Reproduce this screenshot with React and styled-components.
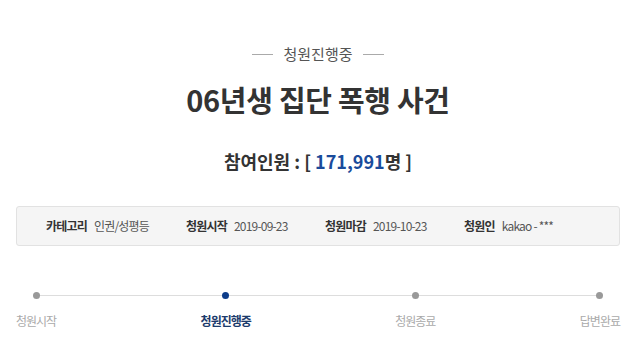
import React from 'react';
import styled, { createGlobalStyle } from 'styled-components';

const GlobalStyle = createGlobalStyle`
	body {
		margin: 0;
		background: #fff;
		font-family: "Noto Sans CJK KR", "Noto Sans", sans-serif;
		color: #333;
	}
`;

const info = [
	{ label: '카테고리', value: '인권/성평등' },
	{ label: '청원시작', value: '2019-09-23' },
	{ label: '청원마감', value: '2019-10-23' },
	{ label: '청원인', value: 'kakao - ***' },
];

const steps = [
	{ name: '청원시작', active: false },
	{ name: '청원진행중', active: true },
	{ name: '청원종료', active: false },
	{ name: '답변완료', active: false },
];

const App = () => {
	return (
		<Page>
			<GlobalStyle />
			<Status>청원진행중</Status>
			<Title>06년생 집단 폭행 사건</Title>
			<Count>
				참여인원 : [ <em>171,991</em>명 ]
			</Count>
			<InfoBox>
				{info.map((item) => (
					<InfoItem key={item.label}>
						<b>{item.label}</b>
						<span>{item.value}</span>
					</InfoItem>
				))}
			</InfoBox>
			<Progress>
				{steps.map((step) => (
					<Step key={step.name}>
						<Dot active={step.active} />
						<StepName active={step.active}>{step.name}</StepName>
					</Step>
				))}
			</Progress>
		</Page>
	);
};

// CSS // CSS // CSS // CSS // CSS // CSS // CSS // CSS // CSS // CSS // CSS
const Page = styled.div`
	width: 640px;
	height: 344px;
	padding: 0 20px 0 16px;
	box-sizing: border-box;
	display: flex;
	flex-direction: column;
	align-items: center;
	overflow: hidden;
`;

const Status = styled.div`
	margin-top: 42px;
	display: flex;
	align-items: center;
	gap: 10px;
	font-size: 15px;
	line-height: 24px;
	color: #555;

	&::before,
	&::after {
		content: '';
		width: 21px;
		height: 1px;
		background: #aaa;
	}
`;

const Title = styled.h1`
	margin: 14px 0 0;
	font-size: 29px;
	line-height: 38px;
	font-weight: 700;
	color: #333;
	letter-spacing: -0.3px;
`;

const Count = styled.div`
	margin-top: 30px;
	font-size: 18px;
	line-height: 26px;
	font-weight: 700;
	color: #333;

	em {
		font-style: normal;
		color: #1a4b9b;
	}
`;

const InfoBox = styled.div`
	margin-top: 32px;
	align-self: stretch;
	height: 40px;
	box-sizing: border-box;
	background: #f5f5f5;
	border: 1px solid #e2e2e2;
	border-radius: 3px;
	padding-left: 29px;
	display: grid;
	grid-template-columns: 140px 139px 139px 1fr;
	align-items: center;
`;

const InfoItem = styled.div`
	display: flex;
	align-items: center;
	gap: 7px;
	font-size: 12px;
	line-height: 18px;

	b {
		font-weight: 700;
		color: #333;
		letter-spacing: -0.8px;
	}

	span {
		color: #555;
		letter-spacing: -0.8px;
	}
`;

const Progress = styled.div`
	margin-top: 45px;
	align-self: stretch;
	position: relative;
	display: flex;
	justify-content: space-between;

	&::before {
		content: '';
		position: absolute;
		left: 19px;
		right: 20px;
		top: 4px;
		height: 1px;
		background: #ddd;
	}
`;

const Step = styled.div`
	display: flex;
	flex-direction: column;
	align-items: center;
	position: relative;
`;

const Dot = styled.span`
	width: 7px;
	height: 7px;
	border-radius: 50%;
	margin-top: 1px;
	background: ${(p) => (p.active ? '#0d3d8a' : '#999')};
`;

const StepName = styled.span`
	margin-top: 13px;
	font-size: 12px;
	line-height: 18px;
	letter-spacing: -1px;
	font-weight: ${(p) => (p.active ? 700 : 400)};
	color: ${(p) => (p.active ? '#1c3b6c' : '#aaa')};
`;

export default App;
